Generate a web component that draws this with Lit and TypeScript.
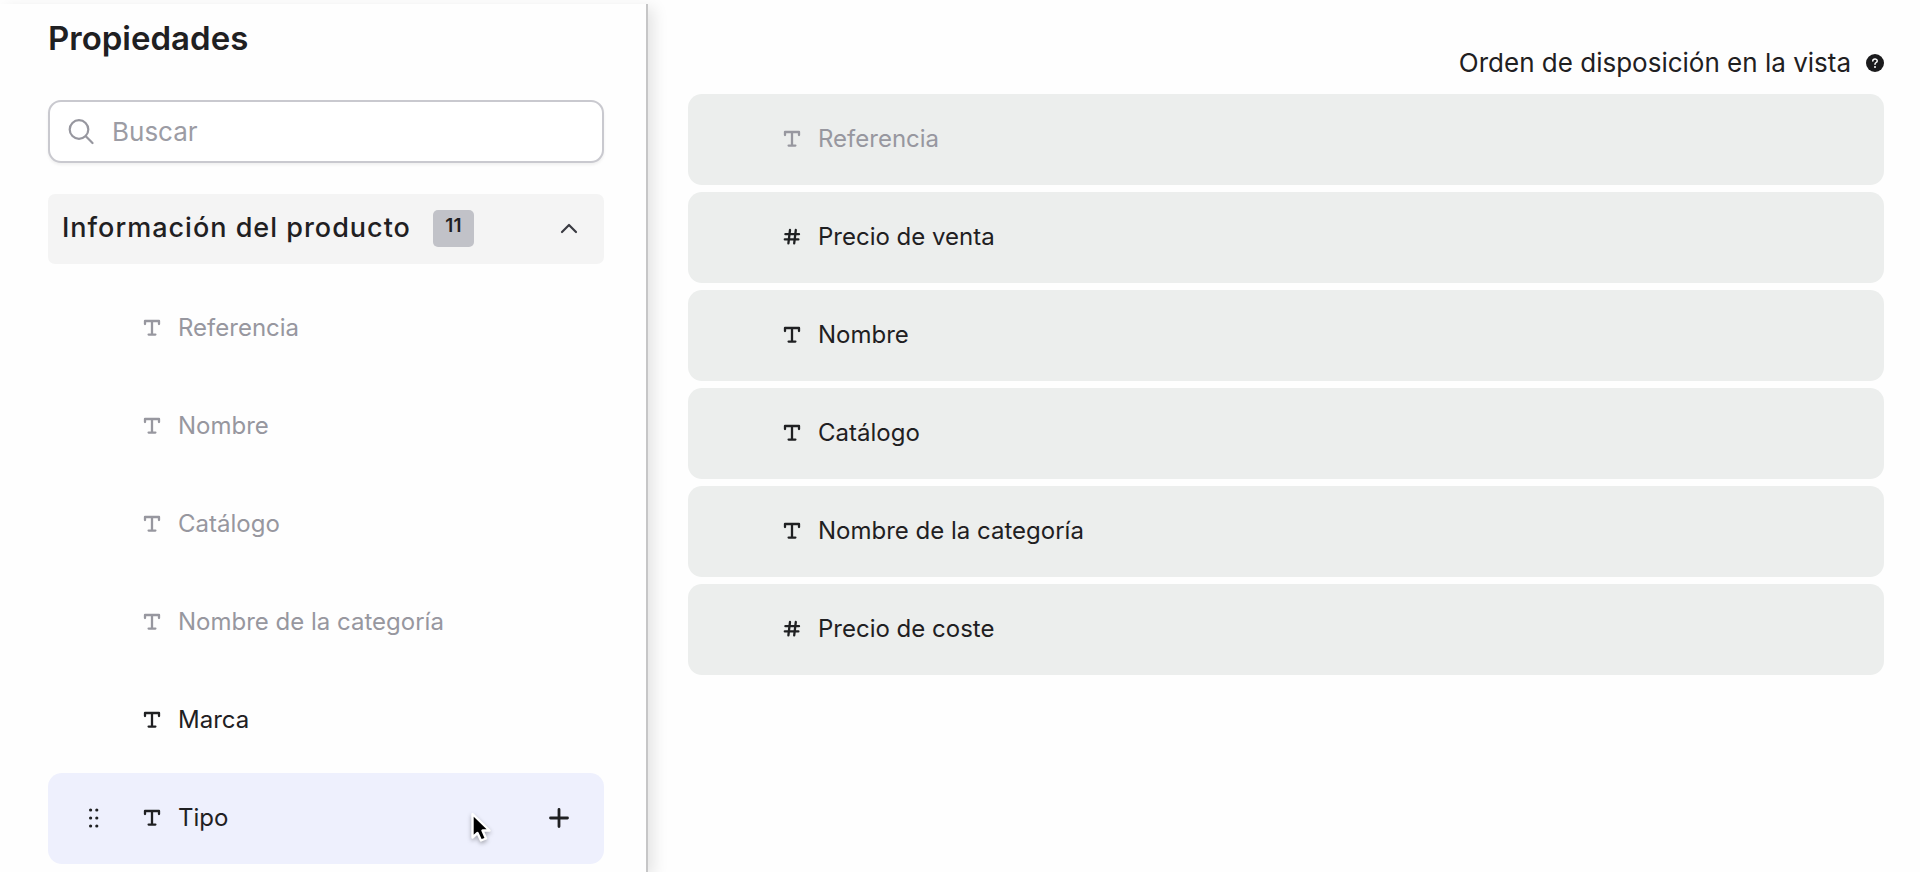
import { LitElement, html, css, svg, nothing } from "lit";
import { customElement, property, state } from "lit/decorators.js";

type Kind = "text" | "number";

interface Item {
  name: string;
  kind: Kind;
  muted?: boolean;
  active?: boolean;
}

const AVAILABLE: Item[] = [
  { name: "Referencia", kind: "text", muted: true },
  { name: "Nombre", kind: "text", muted: true },
  { name: "Catálogo", kind: "text", muted: true },
  { name: "Nombre de la categoría", kind: "text", muted: true },
  { name: "Marca", kind: "text" },
  { name: "Tipo", kind: "text", active: true },
];

const SELECTED: Item[] = [
  { name: "Referencia", kind: "text", muted: true },
  { name: "Precio de venta", kind: "number" },
  { name: "Nombre", kind: "text" },
  { name: "Catálogo", kind: "text" },
  { name: "Nombre de la categoría", kind: "text" },
  { name: "Precio de coste", kind: "number" },
];

const typeShape = svg`<path d="M5 8V5H19V8M12 5V18.6M8.6 18.6H15.4" stroke-width="2.3"/>`;
const hashShape = svg`<path d="M10 5L8.4 18.4M15.800 5L14.200 18.400M5.400 9.200H19M4.800 14.400H18.400" stroke-width="2.3"/>`;

@customElement("property-row")
export class PropertyRow extends LitElement {
  @property({ attribute: false }) item!: Item;
  @property({ type: Boolean }) filled = false;

  static styles = css`
    :host {
      display: block;
    }
    .row {
      position: relative;
      display: flex;
      align-items: center;
      box-sizing: border-box;
      min-height: 91px;
      padding: 0 29px 2px 34px;
      border-radius: 14px;
      color: #1f2022;
    }
    .filled {
      background: #eceeed;
    }
    .active {
      background: #eef0fd;
    }
    .muted {
      color: #97979f;
    }
    .handle {
      display: flex;
      width: 24px;
      margin-right: 34px;
    }
    .kind {
      flex: none;
      width: 24px;
      height: 24px;
      margin-right: 14px;
      fill: none;
      stroke: currentColor;
      stroke-linecap: round;
      stroke-linejoin: round;
    }
    .name {
      flex: 1;
      font-size: 24px;
      line-height: 32px;
    }
    .add {
      display: flex;
      align-items: center;
      justify-content: center;
      width: 32px;
      height: 32px;
      padding: 0;
      border: 0;
      background: none;
      color: inherit;
    }
    .pointer {
      position: absolute;
      right: 108px;
      top: 37px;
      filter: drop-shadow(0 2px 2px rgb(0 0 0 / 30%));
    }
  `;

  render() {
    const { name, kind, muted, active } = this.item;
    return html`
      <div class="row ${this.filled ? "filled" : ""} ${muted ? "muted" : ""} ${active ? "active" : ""}">
        <span class="handle">
          ${active
            ? html`<svg width="24" height="24" viewBox="0 0 24 24" fill="currentColor" aria-hidden="true">
                ${[4, 12, 20].map((y) => svg`<circle cx="8.600" cy=${y} r="1.6"/><circle cx="14.800" cy=${y} r="1.6"/>`)}
              </svg>`
            : nothing}
        </span>
        <svg class="kind" viewBox="0 0 24 24" aria-hidden="true">${kind === "text" ? typeShape : hashShape}</svg>
        <span class="name">${name}</span>
        ${active
          ? html`<button class="add" type="button" aria-label="Añadir ${name}">
                <svg width="20" height="20" viewBox="0 0 20 20" fill="none" stroke="currentColor" stroke-width="2.8" stroke-linecap="round" aria-hidden="true">
                  <path d="M10 1.5V18.5M1.5 10H18.5" />
                </svg>
              </button>
              <svg class="pointer" width="28" height="36" viewBox="0 0 28 36" aria-hidden="true">
                <path d="M4.500 4V27.500L9.500 23L13 30.500L18 28.500L14.500 20.500H21.500Z" fill="#000" stroke="#fff" stroke-width="2.4" stroke-linejoin="round" />
              </svg>`
          : nothing}
      </div>
    `;
  }
}

@customElement("app-root")
export class AppRoot extends LitElement {
  @state() private open = true;
  @state() private query = "";

  static styles = css`
    :host {
      display: block;
      font-family: Inter, "Open Sans", sans-serif;
      color: #1f2022;
      background: #fefefe;
    }
    .layout {
      display: grid;
      grid-template-columns: minmax(0, 27fr) minmax(0, 53fr);
      box-sizing: border-box;
      min-height: 100vh;
      padding-top: 4px;
    }
    .panel {
      padding: 14px 42px 8px 48px;
      border-right: 2px solid #c6c6c7;
      box-shadow: 6px 4px 14px rgb(0 0 0 / 10%);
    }
    h1 {
      margin: 0;
      font-size: 33px;
      line-height: 40px;
      font-weight: 600;
    }
    .search {
      display: flex;
      align-items: center;
      gap: 18px;
      box-sizing: border-box;
      height: 63px;
      margin-top: 42px;
      padding: 0 18px;
      border: 2px solid #c9c9cf;
      border-radius: 13px;
      background: #fff;
      box-shadow: 0 2px 3px rgb(0 0 0 / 6%);
      color: #97979f;
    }
    .search svg {
      flex: none;
    }
    .search input {
      flex: 1;
      min-width: 0;
      padding: 0;
      border: 0;
      outline: 0;
      background: none;
      color: #1f2022;
      font: inherit;
      font-size: 26px;
      line-height: 32px;
    }
    .search input::placeholder {
      color: #9c9ca4;
      opacity: 1;
    }
    .group {
      display: flex;
      align-items: center;
      box-sizing: border-box;
      width: 100%;
      height: 70px;
      margin-top: 31px;
      padding: 0 26px 2px 14px;
      border: 0;
      border-radius: 7px;
      background: #f4f4f4;
      color: inherit;
      font: inherit;
      font-size: 27px;
      line-height: 32px;
      font-weight: 500;
      letter-spacing: 1px;
      text-align: left;
    }
    .count {
      box-sizing: border-box;
      min-width: 41px;
      height: 37px;
      margin-left: 22px;
      border-radius: 5px;
      background: #c1c2c8;
      font-size: 19px;
      line-height: 32px;
      font-weight: 600;
      letter-spacing: 0;
      text-align: center;
    }
    .chevron {
      margin-left: auto;
    }
    .list {
      display: grid;
      gap: 7px;
      margin: 0;
      padding: 0;
      list-style: none;
    }
    .available {
      margin-top: 19px;
    }
    .view {
      padding: 43px 36px 0 40px;
    }
    .caption {
      display: flex;
      align-items: center;
      justify-content: flex-end;
      gap: 15px;
      margin-bottom: 15px;
    }
    h2 {
      margin: 0;
      font-size: 26px;
      line-height: 32px;
      font-weight: 400;
    }
    .help {
      display: flex;
      padding: 0;
      border: 0;
      background: none;
      color: inherit;
    }
  `;

  render() {
    const shown = AVAILABLE.filter((i) => i.name.toLowerCase().includes(this.query.toLowerCase()));
    return html`
      <main class="layout">
        <aside class="panel">
          <h1>Propiedades</h1>
          <label class="search">
            <svg width="26" height="26" viewBox="0 0 26 26" fill="none" stroke="currentColor" stroke-width="2.2" stroke-linecap="round" aria-hidden="true">
              <circle cx="11" cy="10.500" r="9.300" />
              <path d="M17.800 17.300L24.500 24" />
            </svg>
            <input
              type="text"
              placeholder="Buscar"
              aria-label="Buscar"
              .value=${this.query}
              @input=${(e: Event) => (this.query = (e.target as HTMLInputElement).value)}
            />
          </label>
          <button class="group" type="button" aria-expanded=${this.open} @click=${() => (this.open = !this.open)}>
            <span>Información del producto</span>
            <span class="count">11</span>
            <svg class="chevron" width="18" height="12" viewBox="0 0 18 12" fill="none" stroke="#3a3b42" stroke-width="2.2" stroke-linecap="round" stroke-linejoin="round" aria-hidden="true">
              <path d=${this.open ? "M2 10L9 3L16 10" : "M2 3L9 10L16 3"} />
            </svg>
          </button>
          ${this.open
            ? html`<ul class="list available">
                ${shown.map((item) => html`<li><property-row .item=${item}></property-row></li>`)}
              </ul>`
            : nothing}
        </aside>
        <section class="view">
          <div class="caption">
            <h2>Orden de disposición en la vista</h2>
            <button class="help" type="button" aria-label="Ayuda">
              <svg width="18" height="18" viewBox="0 0 18 18" fill="none" aria-hidden="true">
                <circle cx="9" cy="9" r="9" fill="#1b1b1d" />
                <path d="M6.800 7C6.800 4.400 11.200 4.400 11.200 6.900C11.200 8.500 9 8.500 9 10.200" stroke="#fff" stroke-width="1.500" stroke-linecap="round" />
                <circle cx="9" cy="12.900" r="1" fill="#fff" />
              </svg>
            </button>
          </div>
          <ol class="list">
            ${SELECTED.map((item) => html`<li><property-row .item=${item} filled></property-row></li>`)}
          </ol>
        </section>
      </main>
    `;
  }
}
